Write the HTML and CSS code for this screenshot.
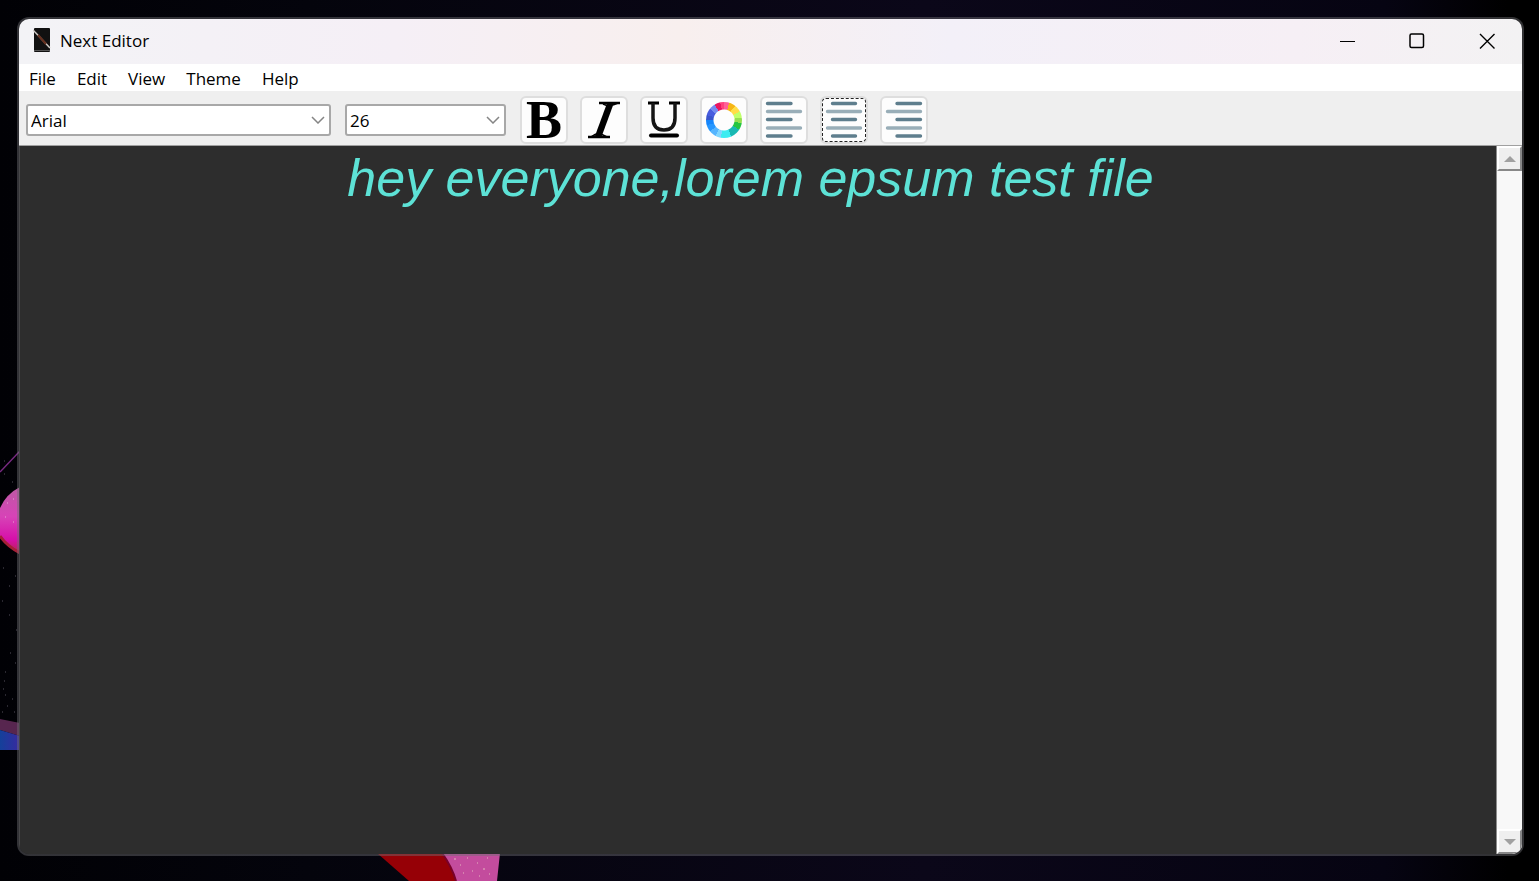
FILE: index.html
```html
<!DOCTYPE html>
<html lang="en">
<head>
<meta charset="utf-8">
<title>Next Editor</title>
<link rel="stylesheet" href="styles.css">
</head>
<body class="desktop">
<svg class="art art-left" width="20" height="306" viewBox="0 0 20 306" aria-hidden="true">
  <defs>
    <linearGradient id="cap" x1="0" y1="0" x2="0" y2="1"><stop offset="0" stop-color="#bd5aa4"/><stop offset=".45" stop-color="#d743b7"/><stop offset=".8" stop-color="#d60fa9"/><stop offset="1" stop-color="#b82450"/></linearGradient>
    <linearGradient id="band" x1="0" y1="0" x2="1" y2="0"><stop offset="0" stop-color="#14409a"/><stop offset="1" stop-color="#3929a0"/></linearGradient>
  </defs>
  <path d="M0 22 20 1" stroke="#792a82" stroke-width="1.5"/>
  <path d="M0 58Q6 44 20 37V103Q6 96 0 86Z" fill="url(#cap)"/>
  <path d="M0 86Q7 96 20 103" fill="none" stroke="#a52038" stroke-width="3"/>
  <path d="M0 269 20 273V286L0 280Z" fill="#57264f"/>
  <path d="M0 280 20 286V300H0Z" fill="url(#band)"/>
  <path d="M13 49h1M7 53h1M13 72h1M5 67h1" stroke="#e7a4d3"/>
  <path d="M4 24h1M12 32h1M4 11h1M3 118h1M15 126h1M9 136h1M2 151h1M9 165h1M16 180h1M10 203h1M15 213h1M5 222h1M3 239h1M12 249h1M7 256h1M14 262h1M4 231h1M5 245h1M2 262h1" stroke="#55505c"/>
</svg>
<svg class="art art-bottom" width="124" height="28" viewBox="0 0 124 28" aria-hidden="true">
  <path d="M0 0H66L80 28H32Z" fill="#960006"/>
  <path d="M65 0H123L120 28H79Q75 14 65 0Z" fill="#c34c9d"/>
  <path d="M65 0Q75 14 79 28" fill="none" stroke="#79002b" stroke-width="2"/>
  <path d="M77 6h2M83 12h1M90 5h1M95 18h1M100 10h1M106 16h2M110 5h1M112 21h1M86 20h1M102 23h1" stroke="#d481ae" stroke-width="2"/>
</svg>

<main class="window">
  <header class="titlebar">
    <svg class="app-icon" width="18" height="24" viewBox="0 0 18 24" aria-hidden="true">
      <rect x="1" width="16" height="24" rx="1" fill="#111"/>
      <path d="M1 22.500H17" stroke="#555"/>
      <path d="M0 2 17 20" stroke="#d0cbc7" stroke-width="1.500"/>
      <path d="M5 7 13 16" stroke="#66301f" stroke-width="2"/>
    </svg>
    <h1 class="title">Next Editor</h1>
    <div class="window-controls">
      <button class="window-button" aria-label="Minimize"><svg width="16" height="16" viewBox="0 0 16 16"><path d="M1 8.500H16" stroke="#000"/></svg></button>
      <button class="window-button" aria-label="Maximize"><svg width="16" height="16" viewBox="0 0 16 16"><rect x="1" y="1" width="13.500" height="13.500" rx="1.500" fill="none" stroke="#000" stroke-width="1.500"/></svg></button>
      <button class="window-button" aria-label="Close"><svg width="16" height="16" viewBox="0 0 16 16"><path d="M1 1 15.500 15.500M15.500 1 1 15.500" stroke="#000" stroke-width="1.400"/></svg></button>
    </div>
  </header>

  <nav class="menubar" aria-label="Main menu">
    <button class="menu-item">File</button>
    <button class="menu-item">Edit</button>
    <button class="menu-item">View</button>
    <button class="menu-item">Theme</button>
    <button class="menu-item">Help</button>
  </nav>

  <div class="toolbar">
    <div class="combo combo-font">
      <select class="combo-select" aria-label="Font family"><option>Arial</option></select>
      <svg class="combo-arrow" width="14" height="8" viewBox="0 0 14 8" aria-hidden="true"><path d="M1 1 7 7 13 1" fill="none" stroke="#858585" stroke-width="1.500"/></svg>
    </div>
    <div class="combo combo-size">
      <select class="combo-select" aria-label="Font size"><option>26</option></select>
      <svg class="combo-arrow" width="14" height="8" viewBox="0 0 14 8" aria-hidden="true"><path d="M1 1 7 7 13 1" fill="none" stroke="#858585" stroke-width="1.500"/></svg>
    </div>
    <div class="tools">
      <button class="tool tool-bold" aria-label="Bold">B</button>
      <button class="tool" aria-label="Italic">
        <svg width="44" height="44" viewBox="0 0 44 44"><path d="M17 5H38M6 39H28" stroke="#000" stroke-width="2.500"/><path d="M28.500 5 16 39" stroke="#000" stroke-width="6.500"/><path d="M21 6 26 8M31 7 36 5M9 39 14 36M19 36 25 39" stroke="#000" stroke-width="1.500"/></svg>
      </button>
      <button class="tool" aria-label="Underline">
        <svg width="44" height="44" viewBox="0 0 44 44"><path d="M6 5H17M27 5H38" stroke="#000" stroke-width="3"/><path d="M11 5V20Q11 32 22 32T33 20V5" fill="none" stroke="#151515" stroke-width="3.500"/><path d="M9 37.500H35" stroke="#000" stroke-width="4" stroke-linecap="round"/></svg>
      </button>
      <button class="tool" aria-label="Text color"><span class="color-wheel"></span></button>
      <button class="tool" aria-label="Align left">
        <svg width="44" height="44" viewBox="0 0 44 44" stroke-width="3.400" stroke-linecap="round"><path d="M5.500 5.500H29M5.500 21.500H29M5.500 38H29" stroke="#5e7e8d"/><path d="M5.500 13.500H38.500M5.500 30H38.500" stroke="#99aeb8"/></svg>
      </button>
      <button class="tool tool-focused" aria-label="Align center" aria-pressed="true">
        <svg width="44" height="44" viewBox="0 0 44 44" stroke-width="3.400" stroke-linecap="round"><path d="M10.500 5.500H33.500M10.500 21.500H33.500M10.500 38H33.500" stroke="#5e7e8d"/><path d="M5.500 13.500H38.500M5.500 30H38.500" stroke="#99aeb8"/></svg>
      </button>
      <button class="tool" aria-label="Align right">
        <svg width="44" height="44" viewBox="0 0 44 44" stroke-width="3.400" stroke-linecap="round"><path d="M15 5.500H38.500M15 21.500H38.500M15 38H38.500" stroke="#5e7e8d"/><path d="M5.500 13.500H38.500M5.500 30H38.500" stroke="#99aeb8"/></svg>
      </button>
    </div>
  </div>

  <div class="workspace">
    <textarea class="editor" aria-label="Document" spellcheck="false">hey everyone,lorem epsum test file</textarea>
    <div class="scrollbar">
      <button class="scroll-button" aria-label="Scroll up"><svg width="12" height="6" viewBox="0 0 12 6"><path d="M0 6 6 0 12 6Z" fill="#a0a0a0"/></svg></button>
      <div class="scroll-track"></div>
      <button class="scroll-button" aria-label="Scroll down"><svg width="12" height="6" viewBox="0 0 12 6"><path d="M0 0H12L6 6Z" fill="#a0a0a0"/></svg></button>
    </div>
  </div>
</main>
</body>
</html>
```
FILE: styles.css
```css
* {
  box-sizing: border-box;
}

button,
select,
textarea {
  margin: 0;
  padding: 0;
  border: 0;
  border-radius: 0;
  background: none;
  color: inherit;
  font: inherit;
}

.desktop {
  display: flex;
  min-height: 100vh;
  margin: 0;
  padding: 17px 15px 25px 17px;
  background: linear-gradient(90deg, #010105 0, #04040c 20%, #0b0719 60%, #060412 90%, #000 98%);
  color: #000;
  font-family: "Open Sans", "Noto Sans", sans-serif;
  font-size: 17px;
}

.art {
  position: absolute;
}

.art-left {
  top: 450px;
  left: 0;
}

.art-bottom {
  bottom: 0;
  left: 377px;
}

.window {
  position: relative;
  display: flex;
  flex: 1;
  flex-direction: column;
  min-width: 0;
  border: 2px solid rgba(110, 110, 115, 0.45);
  border-radius: 12px;
  background: #2d2d2d;
  background-clip: padding-box;
  overflow: hidden;
}

.titlebar {
  display: flex;
  align-items: center;
  height: 45px;
  padding: 0 0 2px 14px;
  background: linear-gradient(90deg, #f3f3f6 0, #f5eff6 25%, #f8efee 44%, #f3f0f8 62%, #f6eff5 85%, #f3f2f3 100%);
}

.app-icon {
  margin-bottom: 2px;
}

.title {
  flex: 1;
  margin: 0 0 0 9px;
  font-size: 17px;
  font-weight: 400;
}

.window-controls {
  display: flex;
}

.window-button {
  display: grid;
  width: 70px;
  height: 42px;
  place-items: center;
}

.menubar {
  display: flex;
  gap: 21px;
  height: 27px;
  padding: 2px 10px 0;
  background: #fff;
}

.toolbar {
  display: flex;
  align-items: center;
  gap: 14px;
  height: 55px;
  padding: 4px 7px 0;
  border-bottom: 1px solid #a0a0a0;
  background: #efefef;
}

.combo {
  position: relative;
  height: 32px;
}

.combo-font {
  width: 305px;
}

.combo-size {
  width: 161px;
}

.combo-select {
  width: 100%;
  height: 100%;
  padding: 0 3px;
  border: 2px solid #a8a8a8;
  border-radius: 3px;
  background: #fff;
  appearance: none;
}

.combo-arrow {
  position: absolute;
  top: 12px;
  right: 6px;
  pointer-events: none;
}

.tools {
  display: flex;
  gap: 12px;
}

.tool {
  display: grid;
  width: 48px;
  height: 48px;
  place-items: center;
  border: 2px solid #dedede;
  border-radius: 6px;
  background: #fdfdfd;
}

.tool-bold {
  font: bold 54px/44px "Liberation Serif", serif;
}

.tool-focused {
  outline: 1px dashed #222;
  outline-offset: -3px;
}

.color-wheel {
  width: 36px;
  height: 36px;
  border-radius: 50%;
  background:
    radial-gradient(circle, #fdfdfd 10px, transparent 11px),
    conic-gradient(
      from -12deg,
      #ff407b 0 12deg, #ff6096 0 29deg, #f6b615 0 50deg, #ffdd48 0 73deg,
      #c0ff6a 0 94deg, #95df50 0 112deg, #25c641 0 135deg, #19b9b3 0 168deg,
      #3cecf1 0 202deg, #80d6ff 0 220deg, #55b5ff 0 243deg, #2697ff 0 265deg,
      #1686fb 0 281deg, #3a55cc 0 298deg, #485cdf 0 320deg, #748af0 0 341deg,
      #e91660 0
    );
}

.workspace {
  display: flex;
  flex: 1;
  min-height: 0;
}

.editor {
  flex: 1;
  min-width: 0;
  padding: 2px 16px 2px 1px;
  border-left: 1px solid #48484a;
  background: #2d2d2d;
  color: #5de2d6;
  font: italic 52px/60px "Liberation Sans", Arial, sans-serif;
  text-align: center;
  outline: 0;
  resize: none;
}

.scrollbar {
  display: flex;
  flex-direction: column;
  width: 26px;
  border-left: 1px solid #8c8c8c;
  background: #f8f8f8;
}

.scroll-track {
  flex: 1;
}

.scroll-button {
  display: grid;
  height: 25px;
  place-items: center;
  border: 2px solid;
  border-color: #fff #888 #888 #fff;
  background: #efefef;
}
```
